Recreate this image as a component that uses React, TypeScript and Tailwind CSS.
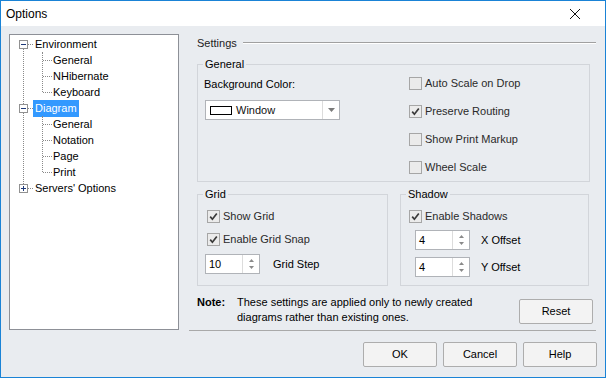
import React from 'react';

const FONT = { fontFamily: '"Liberation Sans", Arial, sans-serif' };

function Expander({ open }: { open: boolean }) {
  return (
    <svg width="9" height="9" viewBox="0 0 9 9" className="relative z-10 shrink-0">
      <rect x="0.5" y="0.5" width="8" height="8" fill="#fff" stroke="#919191" />
      <path d="M2 4.5h5" stroke="#1f3a7a" />
      {!open && <path d="M4.5 2v5" stroke="#1f3a7a" />}
    </svg>
  );
}

function TopNode({ label, open, selected }: { label: string; open: boolean; selected?: boolean }) {
  return (
    <div className="flex h-4 items-center">
      <Expander open={open} />
      <span className="w-[5px] border-t border-dotted border-[#8a8a8a]" />
      <span
        className={
          selected
            ? 'bg-[#3399ff] px-[2px] leading-[17px] text-white'
            : 'px-[2px] leading-[16px] text-black'
        }
      >
        {label}
      </span>
    </div>
  );
}

function ChildNodes({ items }: { items: string[] }) {
  return (
    <div className="relative">
      <span className="absolute left-[23px] top-0 bottom-[8px] border-l border-dotted border-[#8a8a8a]" />
      {items.map((it) => (
        <div key={it} className="flex h-4 items-center pl-[24px]">
          <span className="w-[9px] border-t border-dotted border-[#8a8a8a]" />
          <span className="ml-[1px] text-black">{it}</span>
        </div>
      ))}
    </div>
  );
}

function CheckBox({ label, checked }: { label: string; checked?: boolean }) {
  return (
    <div className="flex h-4 items-center">
      <span className="flex h-[13px] w-[13px] shrink-0 items-center justify-center border border-[#a6a6a6] bg-[#ebebeb]">
        {checked && (
          <svg width="9" height="9" viewBox="0 0 9 9">
            <path d="M1.2 4.6 L3.4 7.2 L7.8 1.4" stroke="#3a3a3a" strokeWidth="1.7" fill="none" />
          </svg>
        )}
      </span>
      <span className="ml-[3px] text-[#2a2a2a]">{label}</span>
    </div>
  );
}

function Spinner({ value }: { value: string }) {
  return (
    <div className="flex h-[20px] w-[55px] border border-[#b0b3b8] bg-white">
      <span className="flex-1 pl-[3px] leading-[18px] text-black">{value}</span>
      <span className="flex w-[17px] flex-col items-center justify-center gap-[4px] border-l border-[#dcdcdc]">
        <svg width="5" height="3" viewBox="0 0 5 3">
          <path d="M0 3h5L2.5 0z" fill="#8a8a8a" />
        </svg>
        <svg width="5" height="3" viewBox="0 0 5 3">
          <path d="M0 0h5L2.5 3z" fill="#8a8a8a" />
        </svg>
      </span>
    </div>
  );
}

function Button({ label }: { label: string }) {
  return (
    <button className="h-[25px] w-[74px] rounded-[2px] border border-[#adadad] bg-[#f3f3f3] text-[11px] text-black">
      {label}
    </button>
  );
}

export default function App() {
  return (
    <div
      className="flex h-[378px] w-[606px] flex-col border border-[#1a83d6] bg-[#e9ecf0] text-[11px]"
      style={FONT}
    >
      {/* Title bar */}
      <div className="flex h-[25px] items-center justify-between bg-white pl-[5px]">
        <span className="text-[12px] text-black">Options</span>
        <div className="mr-[8px] flex h-full w-[45px] items-center justify-center">
          <svg width="10" height="10" viewBox="0 0 10 10">
            <path d="M0 0L10 10M10 0L0 10" stroke="#111" strokeWidth="1" />
          </svg>
        </div>
      </div>

      {/* Body */}
      <div className="box-content flex h-[297px] pt-[8px]">
        {/* Tree */}
        <div className="ml-[8px] h-[296px] w-[170px] border border-[#8d9097] bg-white pl-[9px] pt-[1px]">
          <div className="relative">
            <span className="absolute left-[4px] top-[13px] bottom-[12px] border-l border-dotted border-[#8a8a8a]" />
            <TopNode label="Environment" open />
            <ChildNodes items={['General', 'NHibernate', 'Keyboard']} />
            <TopNode label="Diagram" open selected />
            <ChildNodes items={['General', 'Notation', 'Page', 'Print']} />
            <TopNode label="Servers' Options" open={false} />
          </div>
        </div>

        {/* Settings panel */}
        <div className="ml-[10px] flex h-[297px] w-[407px] flex-col border-b border-[#a9a9a9]">
          <div className="flex h-[18px] items-center pl-[8px]">
            <span className="text-[#222]">Settings</span>
            <span className="ml-[6px] h-[2px] flex-1 border-t border-b border-t-[#a0a0a0] border-b-white" />
          </div>

          <fieldset className="ml-[8px] mr-[6px] mt-[5px] h-[125px] border border-[#d2d5da] px-[5px]">
            <legend className="px-[2px] leading-[14px] text-black">General</legend>
            <div className="flex">
              <div className="w-[206px] pt-[6px]">
                <div className="pl-[1px] leading-[14px] text-black">Background Color:</div>
                <div className="ml-[2px] mt-[9px] flex h-[20px] w-[135px] border border-[#b0b3b8] bg-white">
                  <div className="flex flex-1 items-center pl-[4px]">
                    <span className="h-[9px] w-[22px] border border-black bg-white" />
                    <span className="ml-[4px] text-[#111]">Window</span>
                  </div>
                  <span className="flex w-[17px] items-center justify-center border-l border-[#dcdcdc]">
                    <svg width="7" height="4" viewBox="0 0 7 4">
                      <path d="M0 0h7L3.5 4z" fill="#7a7a7a" />
                    </svg>
                  </span>
                </div>
              </div>
              <div className="mt-[4px] flex flex-col gap-[12px]">
                <CheckBox label="Auto Scale on Drop" />
                <CheckBox label="Preserve Routing" checked />
                <CheckBox label="Show Print Markup" />
                <CheckBox label="Wheel Scale" />
              </div>
            </div>
          </fieldset>

          <div className="ml-[8px] mt-[5px] flex">
            <fieldset className="h-[99px] w-[191px] border border-[#d2d5da] px-[5px]">
              <legend className="px-[2px] leading-[14px] text-black">Grid</legend>
              <div className="flex flex-col gap-[7px] pl-[4px] pt-[7px]">
                <CheckBox label="Show Grid" checked />
                <CheckBox label="Enable Grid Snap" checked />
              </div>
              <div className="ml-[2px] mt-[7px] flex items-center">
                <Spinner value="10" />
                <span className="ml-[13px] text-black">Grid Step</span>
              </div>
            </fieldset>
            <fieldset className="ml-[12px] h-[99px] w-[189px] border border-[#d2d5da] px-[5px]">
              <legend className="px-[2px] leading-[14px] text-black">Shadow</legend>
              <div className="pl-[3px] pt-[7px]">
                <CheckBox label="Enable Shadows" checked />
              </div>
              <div className="mt-[6px] flex flex-col gap-[7px] pl-[9px]">
                <div className="flex items-center">
                  <Spinner value="4" />
                  <span className="ml-[11px] text-black">X Offset</span>
                </div>
                <div className="flex items-center">
                  <Spinner value="4" />
                  <span className="ml-[11px] text-black">Y Offset</span>
                </div>
              </div>
            </fieldset>
          </div>

          <div className="mt-[9px] flex items-start justify-between pl-[8px] pr-[3px]">
            <div className="flex leading-[15px] text-black">
              <span className="w-[40px] font-bold">Note:</span>
              <span>
                These settings are applied only to newly created
                <br />
                diagrams rather than existing ones.
              </span>
            </div>
            <div className="mt-[4px]">
              <Button label="Reset" />
            </div>
          </div>
        </div>
      </div>

      {/* Buttons */}
      <div className="mt-[11px] flex justify-end gap-[6px] pr-[8px]">
        <Button label="OK" />
        <Button label="Cancel" />
        <Button label="Help" />
      </div>
    </div>
  );
}
